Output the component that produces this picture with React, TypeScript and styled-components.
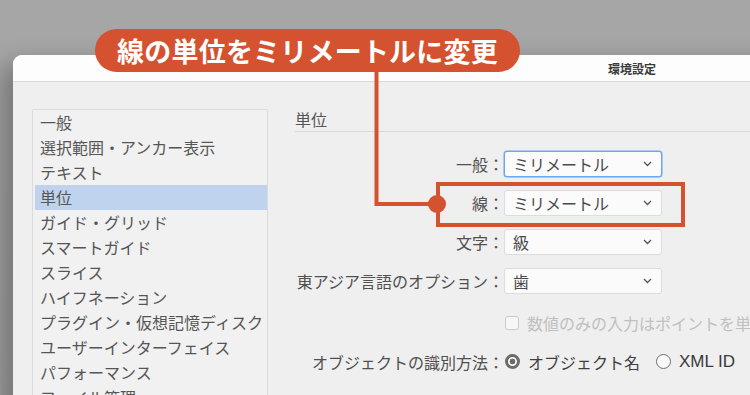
import React from "react";
import styled, { createGlobalStyle } from "styled-components";

const ORANGE = "#d4522f";
const FONT = `"Noto Sans CJK JP", "Noto Sans", sans-serif`;

const Global = createGlobalStyle`
  html, body { margin: 0; padding: 0; background: #a5a5a5; overflow: hidden; }
  body { font-family: ${FONT}; }
`;

const Stage = styled.div`
  position: relative;
  width: 750px;
  height: 395px;
  overflow: hidden;
  background: linear-gradient(180deg, #a6a6a6 0%, #a3a3a3 100%);
  padding-top: 55px;
  padding-left: 13px;
  box-sizing: border-box;
`;

const Window = styled.div`
  width: 1238px;
  height: 400px;
  background: #efefef;
  border-radius: 9px 9px 0 0;
  box-shadow: -6px 14px 24px 6px rgba(0, 0, 0, 0.28);
  display: flex;
  flex-direction: column;
`;

const TitleBar = styled.div`
  height: 27px;
  background: #fdfdfd;
  border-radius: 9px 9px 0 0;
  border-bottom: 1px solid #dadada;
  display: flex;
  align-items: center;
  justify-content: center;
  font-size: 12px;
  font-weight: 700;
  color: #3a3a3a;
  padding-top: 1px;
  box-sizing: border-box;
`;

const Body = styled.div`
  display: flex;
  gap: 27px;
  padding: 27px 0 0 19px;
`;

const Sidebar = styled.ul`
  list-style: none;
  margin: 0;
  padding: 0 0 0 2px;
  width: 236px;
  height: 320px;
  box-sizing: border-box;
  border: 1px solid #dbdbdb;
  background: #f1f1f1;
  border-radius: 2px;
`;

const Item = styled.li<{ $selected?: boolean }>`
  height: 25px;
  line-height: 25px;
  padding-left: 5px;
  font-size: 16px;
  color: #555555;
  white-space: nowrap;
  background: ${(p) => (p.$selected ? "#bfd3ef" : "transparent")};
`;

const Panel = styled.div`
  flex: 1;
  display: flex;
  flex-direction: column;
`;

const SectionHeader = styled.div`
  height: 22px;
  line-height: 20px;
  font-size: 16px;
  color: #555555;
  border-bottom: 1px solid #d9d9d9;
`;

const Form = styled.div`
  margin-top: 19px;
  display: grid;
  grid-template-columns: 209px 158px;
  grid-auto-rows: 26px;
  row-gap: 13px;
  align-items: center;
`;

const Label = styled.div<{ $shift?: number }>`
  grid-column: 1;
  text-align: right;
  font-size: 16px;
  color: #505050;
  white-space: nowrap;
  margin-top: ${(p) => p.$shift ?? 0}px;
`;

const Select = styled.div<{ $focused?: boolean }>`
  height: 26px;
  box-sizing: border-box;
  border: 1px solid ${(p) => (p.$focused ? "#6aa6f3" : "#dcdcdc")};
  box-shadow: ${(p) => (p.$focused ? "0 0 0 0.5px #6aa6f3" : "none")};
  background: #fbfbfb;
  border-radius: 3px;
  display: flex;
  align-items: center;
  justify-content: space-between;
  padding: 0 9px 0 8px;
  font-size: 16px;
  color: #4a4a4a;
`;

const Chevron = () => (
  <svg width="9" height="6" viewBox="0 0 9 6">
    <polyline points="1,1 4.5,4.5 8,1" fill="none" stroke="#555" strokeWidth="1.3" />
  </svg>
);

const Options = styled.div<{ $muted?: boolean; $shift?: number }>`
  grid-column: 2;
  display: flex;
  align-items: center;
  gap: 8px;
  padding-left: 1px;
  white-space: nowrap;
  font-size: 16px;
  margin-top: ${(p) => p.$shift ?? 0}px;
  color: ${(p) => (p.$muted ? "#c0c0c0" : "#3f3f3f")};
`;

const Checkbox = styled.span`
  width: 14px;
  height: 14px;
  box-sizing: border-box;
  border: 1px solid #cacaca;
  border-radius: 3px;
  background: #f6f6f6;
  flex: none;
`;

const Radio = styled.span<{ $checked?: boolean }>`
  width: 15px;
  height: 15px;
  box-sizing: border-box;
  border-radius: 50%;
  flex: none;
  border: ${(p) => (p.$checked ? "3px solid #6b6b6b" : "1.3px solid #6f6f6f")};
  background: ${(p) =>
    p.$checked ? "radial-gradient(circle, #6b6b6b 0 2.6px, #ffffff 3.2px)" : "#fafafa"};
`;

const RadioGroup = styled.span`
  display: flex;
  align-items: center;
  gap: 8px;
  margin-right: 8px;
`;

const Latin = styled.span`
  font-family: "Liberation Sans", Arial, sans-serif;
  font-size: 17px;
  color: #3a3a3a;
`;

const Pill = styled.div`
  position: absolute;
  left: 95px;
  top: 29px;
  width: 425px;
  height: 43px;
  border-radius: 22px;
  background: ${ORANGE};
  color: #ffffff;
  font-size: 27px;
  font-weight: 700;
  display: flex;
  align-items: center;
  justify-content: center;
  white-space: nowrap;
  letter-spacing: 0.2px;
`;

const Connector = styled.svg`
  position: absolute;
  left: 0;
  top: 0;
  width: 750px;
  height: 395px;
  pointer-events: none;
`;

const Highlight = styled.div`
  position: absolute;
  left: 436px;
  top: 182px;
  width: 249px;
  height: 45px;
  box-sizing: border-box;
  border: 4.5px solid ${ORANGE};
`;

const items = [
  "一般",
  "選択範囲・アンカー表示",
  "テキスト",
  "単位",
  "ガイド・グリッド",
  "スマートガイド",
  "スライス",
  "ハイフネーション",
  "プラグイン・仮想記憶ディスク",
  "ユーザーインターフェイス",
  "パフォーマンス",
  "ファイル管理",
];

const rows = [
  { label: "一般：", value: "ミリメートル", focused: true },
  { label: "線：", value: "ミリメートル" },
  { label: "文字：", value: "級" },
  { label: "東アジア言語のオプション：", value: "歯" },
];

export default function App() {
  return (
    <>
      <Global />
      <Stage>
        <Window>
          <TitleBar>環境設定</TitleBar>
          <Body>
            <Sidebar>
              {items.map((it) => (
                <Item key={it} $selected={it === "単位"}>
                  {it}
                </Item>
              ))}
            </Sidebar>
            <Panel>
              <SectionHeader>単位</SectionHeader>
              <Form>
                {rows.map((r) => (
                  <React.Fragment key={r.label}>
                    <Label>{r.label}</Label>
                    <Select $focused={r.focused}>
                      <span>{r.value}</span>
                      <Chevron />
                    </Select>
                  </React.Fragment>
                ))}
                <Options $muted $shift={6}>
                  <Checkbox />
                  数値のみの入力はポイントを単位とする
                </Options>
                <Label $shift={5}>オブジェクトの識別方法：</Label>
                <Options $shift={5}>
                  <RadioGroup>
                    <Radio $checked />
                    オブジェクト名
                  </RadioGroup>
                  <RadioGroup>
                    <Radio />
                    <Latin>XML ID</Latin>
                  </RadioGroup>
                </Options>
              </Form>
            </Panel>
          </Body>
        </Window>
        <Connector viewBox="0 0 750 395">
          <path d="M376.5 70 V204 H437" fill="none" stroke={ORANGE} strokeWidth="4" />
          <circle cx="437" cy="204" r="9" fill={ORANGE} />
        </Connector>
        <Highlight />
        <Pill>線の単位をミリメートルに変更</Pill>
      </Stage>
    </>
  );
}
